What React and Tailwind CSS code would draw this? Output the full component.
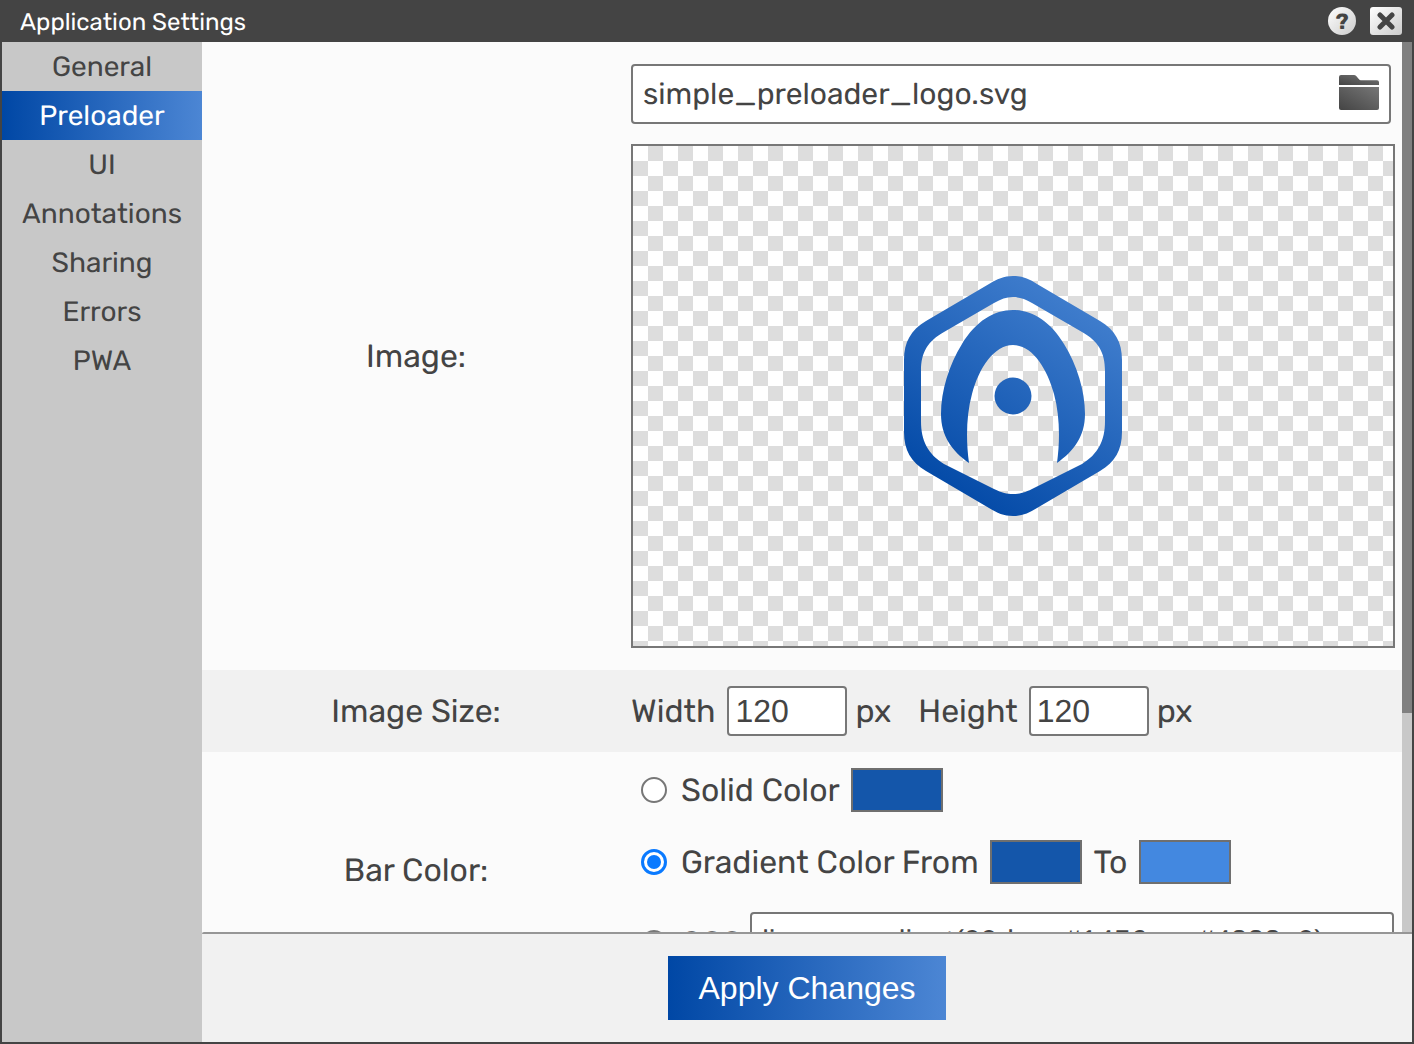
const tabs = ['General', 'Preloader', 'UI', 'Annotations', 'Sharing', 'Errors', 'PWA'];

const FolderIcon = () => (
    <svg className="mb-1" width="40" height="36" viewBox="0 0 40 36">
        <defs>
            <linearGradient id="folderFill" x1="0" y1="1" x2="1" y2="0">
                <stop offset="0" stopColor="#444444" />
                <stop offset="1" stopColor="#777777" />
            </linearGradient>
        </defs>
        <path d="M0 11V3a2 2 0 0 1 2-2h13a3 3 0 0 1 2.2 1l3 3.5a2 2 0 0 0 1.5.7H38a2 2 0 0 1 2 2V11Z" fill="url(#folderFill)" />
        <path d="M0 13h40v21a2 2 0 0 1-2 2H2a2 2 0 0 1-2-2Z" fill="url(#folderFill)" />
    </svg>
);

const LogoIcon = () => (
    <svg width="218" height="240" viewBox="0 0 218 240">
        <defs>
            <linearGradient id="logoFill" gradientUnits="userSpaceOnUse" x1="50" y1="235" x2="190" y2="20">
                <stop offset="0" stopColor="#0047a5" />
                <stop offset="1" stopColor="#4380cf" />
            </linearGradient>
        </defs>
        <path
            fillRule="evenodd"
            fill="url(#logoFill)"
            d="M109 0C118 0 125 3 133 8L196 45C211 54 218 66 218 84V156C218 174 211 186 196 195L133 232C125 237 118 240 109 240C100 240 93 237 85 232L22 195C7 186 0 174 0 156V84C0 66 7 54 22 45L85 8C93 3 100 0 109 0ZM109 21C102 21 97 23 90 27L40 56C24 65 17 76 17 95V145C17 165 24 178 40 188L90 213C98 217 103 218 109 218C115 218 120 217 128 213L178 188C194 178 201 165 201 145V95C201 76 194 65 178 56L128 27C121 23 116 21 109 21Z"
        />
        <path
            fill="url(#logoFill)"
            d="M109 34C128 34 146 45 160 68C173 89 181 115 181 138C181 160 170 175 153 187C156 165 156 140 150 118C143 92 128 69 109 69C90 69 75 92 68 118C62 140 62 165 65 187C48 175 37 160 37 138C37 115 45 89 58 68C72 45 90 34 109 34Z"
        />
        <circle cx="109" cy="120" r="18.5" fill="url(#logoFill)" />
    </svg>
);

const Swatch = ({ className }) => <div className={`w-[92px] h-[44px] border-2 border-[#6f6f6f] ${className}`} />;

const NumberBox = ({ value }) => (
    <div className="w-[120px] h-[50px] flex items-center pl-[6px] bg-white border-2 border-[#777777] rounded-[4px] font-['Liberation_Sans',sans-serif] text-[32px]">{value}</div>
);

export default function App() {
    return (
        <div className="w-[1414px] h-[1044px] flex flex-col overflow-hidden bg-[#444444] px-[2px] pb-[2px] font-['Rubik','Inter',sans-serif] text-[32px] text-[#444444] [text-rendering:geometricPrecision]">
            {/* Title bar */}
            <div className="h-[42px] -mx-[2px] shrink-0 flex items-center justify-between pl-5 pr-3 text-[24px] text-white">
                <span className="pt-px">Application Settings</span>
                <div className="flex items-center gap-[14px]">
                    <div className="w-[28px] h-[28px] rounded-full flex items-center justify-center bg-linear-to-br from-white to-[#cccccc] text-[#444444] text-[22px] font-bold">?</div>
                    <div className="w-[32px] h-[28px] rounded-[3px] flex items-center justify-center bg-linear-to-br from-white to-[#cccccc]">
                        <svg width="18" height="18" viewBox="0 0 18 18">
                            <path d="M3 3l12 12M15 3L3 15" stroke="#444444" strokeWidth="5" strokeLinecap="round" />
                        </svg>
                    </div>
                </div>
            </div>

            <div className="flex-1 min-h-0 flex">
                {/* Tabs */}
                <div className="w-[200px] shrink-0 bg-[#c8c8c8] text-[28px]">
                    {tabs.map((tab) => (
                        <div
                            key={tab}
                            className={`h-[49px] flex items-center justify-center ${tab === 'Preloader' ? 'bg-linear-to-r/srgb from-[#0047a5] to-[#4c86d4] text-white' : ''}`}
                        >
                            {tab}
                        </div>
                    ))}
                </div>

                <div className="flex-1 min-w-0 flex flex-col bg-[#f1f1f1]">
                    <div className="h-[890px] shrink-0 flex">
                        <div className="flex-1 min-w-0 overflow-hidden bg-[#fbfbfb]">
                            {/* Image */}
                            <div className="h-[628px] flex">
                                <div className="w-[428px] shrink-0 flex items-center justify-center">Image:</div>
                                <div className="flex-1 min-w-0 pt-[22px] pl-px">
                                    <div className="w-[760px] h-[60px] flex items-center justify-between px-[10px] bg-white border-2 border-[#777777] rounded-[4px] text-[30px]">
                                        <span>simple_preloader_logo.svg</span>
                                        <FolderIcon />
                                    </div>
                                    <div className="mt-5 w-[764px] h-[504px] flex items-center justify-center border-2 border-[#777777] bg-[repeating-conic-gradient(#dddddd_0_25%,#ffffff_0_50%)] bg-[length:30px_30px]">
                                        <LogoIcon />
                                    </div>
                                </div>
                            </div>

                            {/* Image size */}
                            <div className="h-[82px] flex items-center bg-[#f1f1f1]">
                                <div className="w-[428px] shrink-0 text-center">Image Size:</div>
                                <div className="flex items-center pl-px">
                                    <span>Width</span>
                                    <div className="ml-[12px]"><NumberBox value="120" /></div>
                                    <span className="ml-[8px]">px</span>
                                    <span className="ml-[27px]">Height</span>
                                    <div className="ml-[11px]"><NumberBox value="120" /></div>
                                    <span className="ml-[8px]">px</span>
                                </div>
                            </div>

                            {/* Bar color */}
                            <div className="flex">
                                <div className="w-[428px] shrink-0 flex items-center justify-center h-[236px]">Bar Color:</div>
                                <div className="pt-4 pl-px">
                                    <div className="h-[44px] flex items-center pl-[10px]">
                                        <div className="w-[26px] h-[26px] rounded-full border-2 border-[#777777] bg-white" />
                                        <span className="ml-[14px]">Solid Color</span>
                                        <Swatch className="ml-[11px] bg-[#1456aa]" />
                                    </div>
                                    <div className="mt-[28px] h-[44px] flex items-center pl-[10px]">
                                        <div className="w-[26px] h-[26px] rounded-full border-[3px] border-[#0a7aff] bg-white flex items-center justify-center">
                                            <div className="w-[14px] h-[14px] rounded-full bg-[#0a7aff]" />
                                        </div>
                                        <span className="ml-[14px]">Gradient Color From</span>
                                        <Swatch className="ml-[11px] bg-[#1456aa]" />
                                        <span className="ml-[12px]">To</span>
                                        <Swatch className="ml-[12px] bg-[#4388e0]" />
                                    </div>
                                    <div className="mt-[28px] flex items-start pl-[10px]">
                                        <div className="mt-[18px] w-[26px] h-[26px] rounded-full border-2 border-[#777777] bg-white" />
                                        <span className="ml-[14px] mt-[7px]">CSS</span>
                                        <div className="ml-[8px] w-[644px] h-[60px] pl-[10px] pt-2 bg-white border-2 border-[#777777] rounded-[4px] font-['Liberation_Sans',sans-serif] text-[30px] leading-[40px] whitespace-nowrap">linear-gradient(90deg, #1456aa, #4388e0)</div>
                                    </div>
                                </div>
                            </div>
                        </div>

                        {/* Scrollbar */}
                        <div className="w-[10px] shrink-0 bg-[#c8c8c8]">
                            <div className="h-[671px] bg-[#808080]" />
                        </div>
                    </div>

                    {/* Footer */}
                    <div className="flex-1 flex items-center justify-center border-t-2 border-[#969696] rounded-tl-[2px]">
                        <button className="w-[278px] h-[64px] bg-linear-to-r/srgb from-[#0047a5] to-[#4c86d4] text-white font-['Liberation_Sans',sans-serif] text-[32px]">Apply Changes</button>
                    </div>
                </div>
            </div>
        </div>
    );
}
